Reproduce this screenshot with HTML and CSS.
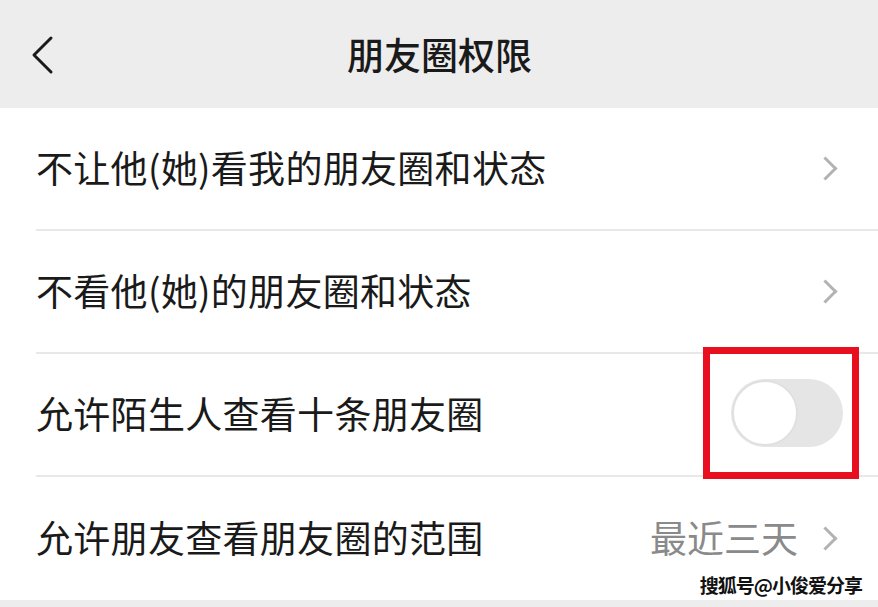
FILE: index.html
```html
<!DOCTYPE html>
<html lang="zh-CN">
  <head>
    <meta charset="UTF-8" />
    <meta name="viewport" content="width=device-width, initial-scale=1.0" />
    <title>朋友圈权限</title>
    <link rel="stylesheet" href="styles.css">
  </head>
  <body>
    <header class="topbar">
      <button class="back-button" aria-label="返回">
        <svg width="24" height="40" viewBox="0 0 24 40">
          <path d="M21 3 L4 20 L21 37" fill="none" stroke="#1a1a1a" stroke-width="3" stroke-linecap="round" stroke-linejoin="round" />
        </svg>
      </button>
      <h1 class="topbar-title">朋友圈权限</h1>
    </header>

    <ul class="settings-list">
      <li class="settings-item">
        <span class="item-label">不让他(她)看我的朋友圈和状态</span>
        <span class="chevron"></span>
      </li>
      <li class="settings-item">
        <span class="item-label">不看他(她)的朋友圈和状态</span>
        <span class="chevron"></span>
      </li>
      <li class="settings-item">
        <span class="item-label">允许陌生人查看十条朋友圈</span>
        <div class="highlight-box">
          <div class="switch"><span class="switch-knob"></span></div>
        </div>
      </li>
      <li class="settings-item">
        <span class="item-label">允许朋友查看朋友圈的范围</span>
        <span class="item-value">最近三天</span>
        <span class="chevron"></span>
      </li>
    </ul>
    <div class="footer-strip"></div>

    <div class="watermark">搜狐号@小俊爱分享</div>
  </body>
</html>
```

FILE: styles.css
```css
body {
  font-family: "Noto Sans CJK SC", "Noto Sans", sans-serif;
  margin: 0;
  padding: 0;
  background-color: #ffffff;
  color: #1a1a1a;
  position: relative;
  height: 607px;
  overflow: hidden;
}

.topbar {
  background-color: #ededed;
  height: 108px;
  display: flex;
  align-items: center;
  justify-content: center;
  position: relative;
}

.back-button {
  position: absolute;
  left: 30px;
  top: 35px;
  background: none;
  border: none;
  padding: 0;
  cursor: pointer;
}

.topbar-title {
  margin: 0;
  font-size: 37px;
  font-weight: 500;
  color: #1a1a1a;
  padding-left: 1px;
}

.settings-list {
  list-style: none;
  margin: 0;
  padding: 0;
}

.settings-item {
  height: 123px;
  margin-left: 36px;
  padding-right: 40px;
  display: flex;
  align-items: center;
  border-bottom: 2px solid #e8e8e8;
  box-sizing: border-box;
}

.settings-item:last-child {
  border-bottom: none;
}

.item-label {
  flex: 1;
  font-size: 37px;
  line-height: 1;
  color: #1a1a1a;
  margin-top: -3px;
  letter-spacing: 0.3px;
}

.item-value {
  font-size: 37px;
  line-height: 1;
  color: #8a8a8a;
  margin-right: 19px;
  margin-top: -3px;
}

.chevron {
  width: 14px;
  height: 14px;
  border-top: 3px solid #b2b2b2;
  border-right: 3px solid #b2b2b2;
  transform: rotate(45deg);
  margin-right: 4px;
}

.highlight-box {
  width: 133px;
  height: 118px;
  border: 7px solid #e8101f;
  display: flex;
  align-items: center;
  justify-content: flex-end;
  padding-right: 9px;
  margin-right: -21px;
  margin-top: -3px;
}

.switch {
  width: 112px;
  height: 68px;
  border-radius: 34px;
  background-color: #e5e5e5;
  position: relative;
}

.switch-knob {
  position: absolute;
  left: 1px;
  top: 1px;
  width: 62px;
  height: 62px;
  border-radius: 50%;
  background-color: #ffffff;
  border: 2px solid #e0e0e0;
}

.footer-strip {
  background-color: #ededed;
  height: 20px;
}

.watermark {
  position: absolute;
  right: 16px;
  bottom: 9px;
  font-size: 19px;
  font-weight: 700;
  color: #111111;
  text-shadow: -1px 0 #fff, 1px 0 #fff, 0 -1px #fff, 0 1px #fff;
  letter-spacing: -1px;
}
```
